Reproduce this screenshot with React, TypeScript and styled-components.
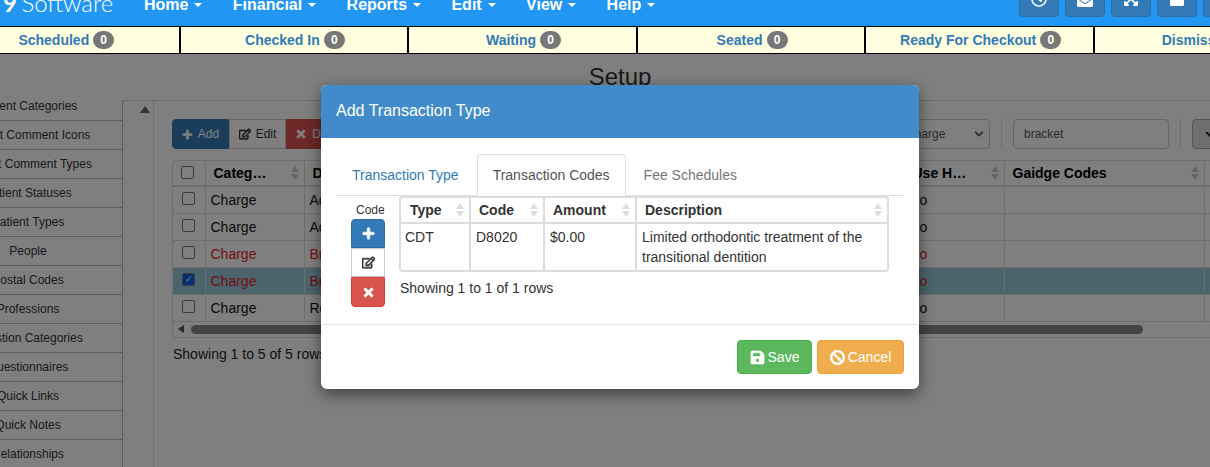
import React from "react";
import styled, { createGlobalStyle } from "styled-components";
import { FaPlus, FaRegEdit, FaTimes, FaSave, FaBan, FaRegClock, FaEnvelopeOpen, FaExpandArrowsAlt, FaSquare, FaChevronDown } from "react-icons/fa";

const Global = createGlobalStyle`
  html, body { margin: 0; padding: 0; background: #fff; }
  body { font-family: "Liberation Sans", Arial, sans-serif; font-size: 14px; color: #333; }
  * { box-sizing: border-box; }
`;

const Page = styled.div`
  position: relative;
  width: 1210px;
  height: 467px;
  overflow: hidden;
  background: #fff;
`;

const Top = styled.header`
  position: relative;
  z-index: 3;
`;

const NavBar = styled.nav`
  display: flex;
  align-items: flex-end;
  height: 26px;
  overflow: hidden;
  background: #2196f3;
  color: #fff;
`;

const Brand = styled.div`
  width: 144px;
  flex: none;
  padding: 0 0 8px 3px;
  font-family: Lato, sans-serif;
  font-weight: 300;
  font-size: 24px;
  line-height: 30px;
  white-space: nowrap;
  b { font-weight: 700; margin-right: -2px; }
`;

const NavMenu = styled.div`
  display: flex;
  gap: 30.4px;
  padding-bottom: 10px;
  flex: 1;
`;

const NavItem = styled.span`
  display: flex;
  align-items: center;
  gap: 6px;
  font-size: 16px;
  font-weight: 700;
  line-height: 22px;
  &::after {
    content: "";
    border-top: 4px solid #fff;
    border-left: 4px solid transparent;
    border-right: 4px solid transparent;
  }
`;

const NavTools = styled.div`
  display: flex;
  gap: 6px;
  align-self: flex-end;
  padding-bottom: 9px;
  margin-right: -33px;
`;

const NavTool = styled.span`
  display: flex;
  justify-content: center;
  align-items: flex-end;
  width: 40px;
  height: 34px;
  padding-bottom: 9px;
  border: 1px solid #2e6da4;
  border-radius: 4px;
  background: #337ab7;
  color: #fff;
  font-size: 16px;
`;

const StatusBar = styled.div`
  display: grid;
  grid-template-columns: repeat(6, 228.6px);
  margin-left: -48px;
  width: 1380px;
  height: 28px;
  border-top: 1px solid #000;
  border-bottom: 1px solid #000;
  background: #ffffe0;
`;

const StatusCell = styled.div`
  display: flex;
  justify-content: center;
  align-items: center;
  gap: 4px;
  padding-left: 2px;
  border-right: 2px solid #000;
  color: #337ab7;
  font-weight: 700;
  font-size: 14px;
`;

const Badge = styled.span`
  min-width: 21px;
  height: 18px;
  border-radius: 10px;
  background: #777;
  color: #fff;
  font-size: 12px;
  line-height: 18px;
  text-align: center;
`;

const Title = styled.h1`
  margin: 9px 0 0;
  padding-left: 30px;
  height: 37px;
  font-size: 24px;
  font-weight: 400;
  line-height: 28px;
  text-align: center;
  color: #333;
`;

const Body = styled.div`
  display: flex;
  height: 367px;
`;

const Sidebar = styled.aside`
  flex: none;
  width: 189px;
  margin-left: -66px;
  border-right: 1px solid #bbb;
  overflow: hidden;
`;

const SideList = styled.div`
  margin-top: -8px;
`;

const SideItem = styled.div`
  height: 29px;
  border-bottom: 1px solid #bbb;
  font-size: 12px;
  line-height: 28px;
  text-align: center;
  white-space: nowrap;
  color: #333;
`;

const Gutter = styled.div`
  flex: none;
  width: 31px;
  padding: 5px 0 0 17px;
  border-top: 1px solid #ddd;
  border-right: 1px solid #ddd;
`;

const UpArrow = styled.div`
  width: 0;
  border-bottom: 7px solid #666;
  border-left: 5px solid transparent;
  border-right: 5px solid transparent;
`;

const Main = styled.main`
  flex: 1;
  min-width: 0;
  padding: 18px 0 0 18px;
  border-top: 1px solid #ddd;
`;

const Toolbar = styled.div`
  display: flex;
  height: 30px;
`;

const ToolGroup = styled.div`
  display: flex;
  flex: none;
  width: 770px;
`;

const ToolBtn = styled.span<{ $bg: string; $fg: string; $w: number }>`
  display: flex;
  align-items: center;
  justify-content: center;
  gap: 5px;
  width: ${(p) => p.$w}px;
  background: ${(p) => p.$bg};
  color: ${(p) => p.$fg};
  border: 1px solid ${(p) => (p.$bg === "#fff" ? "#ccc" : p.$bg)};
  font-size: 12px;
  &:first-child { border-radius: 4px 0 0 4px; }
  svg { stroke: currentColor; stroke-width: 30px; }
`;

const FilterSelect = styled.div`
  display: flex;
  align-items: center;
  justify-content: space-between;
  flex: none;
  width: 128px;
  margin-left: -80px;
  padding: 0 5px 0 43px;
  border: 1px solid #ccc;
  border-radius: 4px;
  font-size: 12px;
  color: #555;
`;

const ToolDivider = styled.span`
  flex: none;
  width: 1px;
  margin: 0 11px;
  background: #ddd;
`;

const FilterInput = styled.div`
  flex: none;
  width: 156px;
  padding-left: 10px;
  border: 1px solid #ccc;
  border-radius: 4px;
  font-size: 12px;
  line-height: 28px;
  color: #555;
`;

const ColumnBtn = styled.span`
  display: flex;
  align-items: center;
  padding-left: 12px;
  flex: none;
  width: 40px;
  height: 30px;
  border: 1px solid #aaa;
  border-radius: 4px;
  background: #dcdcdc;
  color: #111;
  font-size: 11px;
`;

const GridWrap = styled.div`
  width: 1100px;
  margin-top: 11px;
  border: 1px solid #ddd;
  border-radius: 4px;
  overflow: hidden;
`;

const Grid = styled.table`
  border-collapse: collapse;
  table-layout: fixed;
  width: 1100px;
  font-size: 14px;
  color: #222;
`;

const GridHead = styled.th`
  position: relative;
  height: 25px;
  padding: 0 8px;
  border-right: 1px solid #ddd;
  border-bottom: 2px solid #ddd;
  font-size: 14px;
  text-align: left;
  color: #000;
  white-space: nowrap;
`;

const GridCell = styled.td<{ $red?: boolean; $sel?: boolean }>`
  height: 27px;
  padding: 0 5px;
  border-right: 1px solid #ddd;
  border-bottom: 1px solid #ddd;
  color: ${(p) => (p.$red ? "#e0202a" : "#111")};
  background: ${(p) => (p.$sel ? "#98cbd9" : "transparent")};
  white-space: nowrap;
  overflow: hidden;
`;

const CheckCell = styled(GridCell)`
  padding: 0 0 0 9px;
`;

const Check = styled.span<{ $on?: boolean }>`
  display: flex;
  align-items: center;
  justify-content: center;
  width: 13px;
  height: 13px;
  border: 1px solid #767676;
  border-radius: 2px;
  background: ${(p) => (p.$on ? "#0a5fdb" : "#fff")};
  color: #fff;
  font-size: 9px;
  line-height: 1;
  margin-top: -2px;
`;

const Sort = styled.span<{ $c: string }>`
  position: absolute;
  right: 5px;
  top: 50%;
  margin-top: -7px;
  width: 8px;
  height: 14px;
  &::before, &::after {
    content: "";
    position: absolute;
    left: 0;
    border-left: 4px solid transparent;
    border-right: 4px solid transparent;
  }
  &::before { top: 0; border-bottom: 6px solid ${(p) => p.$c}; }
  &::after { bottom: 0; border-top: 6px solid ${(p) => p.$c}; }
`;

const HScroll = styled.div`
  display: flex;
  align-items: center;
  height: 15px;
  padding-left: 5px;
`;

const LeftArrow = styled.div`
  width: 0;
  border-right: 6px solid #555;
  border-top: 4px solid transparent;
  border-bottom: 4px solid transparent;
`;

const Thumb = styled.div`
  width: 952px;
  height: 9px;
  margin-left: 7px;
  border-radius: 5px;
  background: #888;
`;

const GridFoot = styled.div`
  margin: 8px 0 0 1px;
  color: #222;
  font-size: 14px;
`;

const Backdrop = styled.div`
  position: absolute;
  inset: 0;
  z-index: 2;
  background: rgba(0, 0, 0, 0.5);
`;

const Modal = styled.div`
  position: absolute;
  z-index: 4;
  left: 321px;
  top: 85px;
  width: 598px;
  height: 304px;
  display: flex;
  flex-direction: column;
  background: #fff;
  border-radius: 6px;
  overflow: hidden;
  box-shadow: 0 5px 15px rgba(0, 0, 0, 0.5);
`;

const ModalHeader = styled.div`
  height: 53px;
  flex: none;
  padding: 0 15px;
  background: #428bca;
  color: #fff;
  font-size: 16px;
  line-height: 52px;
`;

const ModalBody = styled.div`
  flex: 1;
  padding: 16px 15px 0;
`;

const Tabs = styled.div`
  display: flex;
  height: 42px;
  border-bottom: 1px solid #ddd;
`;

const Tab = styled.span<{ $state: "link" | "active" | "muted" }>`
  height: 42px;
  margin-right: 2px;
  padding: 0 15px;
  border: 1px solid ${(p) => (p.$state === "active" ? "#ddd" : "transparent")};
  border-bottom-color: ${(p) => (p.$state === "active" ? "#fff" : "transparent")};
  border-radius: 4px 4px 0 0;
  background: ${(p) => (p.$state === "active" ? "#fff" : "transparent")};
  line-height: 40px;
  color: ${(p) => (p.$state === "link" ? "#337ab7" : p.$state === "active" ? "#555" : "#777")};
`;

const TabPane = styled.div`
  display: flex;
  padding-left: 15px;
`;

const CodeCol = styled.div`
  flex: none;
  width: 34px;
  margin-right: 14px;
`;

const CodeLabel = styled.div`
  height: 23px;
  padding: 7px 0 0 5px;
  font-size: 12px;
  line-height: 14px;
  color: #333;
  white-space: nowrap;
`;

const StackBtn = styled.span<{ $bg: string; $fg: string; $line: string; $h: number }>`
  display: flex;
  align-items: center;
  justify-content: center;
  width: 34px;
  height: ${(p) => p.$h}px;
  background: ${(p) => p.$bg};
  color: ${(p) => p.$fg};
  border: 1px solid ${(p) => p.$line};
  font-size: 13px;
  &:nth-child(2) { border-radius: 4px 4px 0 0; }
  &:last-child { border-radius: 0 0 4px 4px; }
  svg { stroke: currentColor; stroke-width: 30px; }
`;

const InnerCol = styled.div`
  flex: none;
  width: 490px;
`;

const InnerWrap = styled.div`
  border: 2px solid #ddd;
  border-radius: 4px;
  overflow: hidden;
`;

const Inner = styled.table`
  width: 486px;
  table-layout: fixed;
  border-collapse: collapse;
`;

const InnerHead = styled.th`
  position: relative;
  height: 25px;
  padding: 0 0 0 8px;
  border-right: 2px solid #ddd;
  border-bottom: 2px solid #ddd;
  font-size: 14px;
  text-align: left;
  color: #333;
  &:first-child { padding-left: 9px; }
  &:last-child { border-right: 0; }
`;

const InnerCell = styled.td`
  height: 47px;
  padding: 3px 5px 0;
  vertical-align: top;
  border-right: 2px solid #ddd;
  font-size: 14px;
  line-height: 20px;
  color: #333;
  &:first-child { padding-left: 4px; }
  &:last-child { border-right: 0; }
`;

const InnerFoot = styled.div`
  margin: 8px 0 0 1px;
  line-height: 16px;
  color: #333;
`;

const ModalFooter = styled.div`
  display: flex;
  justify-content: flex-end;
  gap: 5px;
  height: 65px;
  flex: none;
  padding: 15px;
  border-top: 1px solid #e5e5e5;
`;

const FootBtn = styled.span<{ $bg: string; $line: string; $w: number }>`
  display: flex;
  align-items: center;
  justify-content: center;
  gap: 3px;
  width: ${(p) => p.$w}px;
  height: 34px;
  border: 1px solid ${(p) => p.$line};
  border-radius: 4px;
  background: ${(p) => p.$bg};
  color: #fff;
  font-size: 14px;
  svg { font-size: 15px; stroke: currentColor; stroke-width: 20px; }
`;

const menu = ["Home", "Financial", "Reports", "Edit", "View", "Help"];
const statuses = ["Scheduled", "Checked In", "Waiting", "Seated", "Ready For Checkout", "Dismissed"];
const sideItems = [
  "Patient Categories", "Patient Comment Icons", "Patient Comment Types", "Patient Statuses",
  "Patient Types", "People", "Postal Codes", "Professions", "Question Categories",
  "Questionnaires", "Quick Links", "Quick Notes", "Relationships",
];
const rows = [
  { d: "Adjustment", red: false, sel: false },
  { d: "Adjustment", red: false, sel: false },
  { d: "Bracket", red: true, sel: false },
  { d: "Bracket", red: true, sel: true },
  { d: "Retainer", red: false, sel: false },
];

export default function App() {
  return (
    <Page>
      <Global />
      <Top>
        <NavBar>
          <Brand><b>9</b> Software</Brand>
          <NavMenu>
            {menu.map((m) => <NavItem key={m}>{m}</NavItem>)}
          </NavMenu>
          <NavTools>
            <NavTool><FaRegClock /></NavTool>
            <NavTool><FaEnvelopeOpen /></NavTool>
            <NavTool><FaExpandArrowsAlt /></NavTool>
            <NavTool><FaSquare /></NavTool>
            <NavTool />
          </NavTools>
        </NavBar>
        <StatusBar>
          {statuses.map((s) => (
            <StatusCell key={s}>{s} <Badge>0</Badge></StatusCell>
          ))}
        </StatusBar>
      </Top>
      <Title>Setup</Title>
      <Body>
        <Sidebar>
          <SideList>
            {sideItems.map((s) => <SideItem key={s}>{s}</SideItem>)}
          </SideList>
        </Sidebar>
        <Gutter><UpArrow /></Gutter>
        <Main>
          <Toolbar>
            <ToolGroup>
              <ToolBtn $bg="#337ab7" $fg="#fff" $w={57}><FaPlus size={11} /> Add</ToolBtn>
              <ToolBtn $bg="#fff" $fg="#333" $w={57}><FaRegEdit size={12} /> Edit</ToolBtn>
              <ToolBtn $bg="#d9534f" $fg="#fff" $w={70}><FaTimes size={12} /> Delete</ToolBtn>
            </ToolGroup>
            <FilterSelect>Charge <FaChevronDown size={10} /></FilterSelect>
            <ToolDivider />
            <FilterInput>bracket</FilterInput>
            <ToolDivider />
            <ColumnBtn><FaChevronDown /></ColumnBtn>
          </Toolbar>
          <GridWrap>
            <Grid>
              <colgroup>
                <col width="32" /><col width="99" /><col width="600" /><col width="100" /><col width="200" /><col />
              </colgroup>
              <thead>
                <tr>
                  <GridHead><Check /></GridHead>
                  <GridHead>Categ…<Sort $c="#ccc" /></GridHead>
                  <GridHead>Description<Sort $c="#ccc" /></GridHead>
                  <GridHead>Use H…<Sort $c="#ccc" /></GridHead>
                  <GridHead>Gaidge Codes<Sort $c="#ccc" /></GridHead>
                  <GridHead />
                </tr>
              </thead>
              <tbody>
                {rows.map((r, i) => (
                  <tr key={i}>
                    <CheckCell $sel={r.sel}><Check $on={r.sel}>{r.sel ? "✓" : ""}</Check></CheckCell>
                    <GridCell $red={r.red} $sel={r.sel}>Charge</GridCell>
                    <GridCell $red={r.red} $sel={r.sel}>{r.d}</GridCell>
                    <GridCell $red={r.red} $sel={r.sel}>No</GridCell>
                    <GridCell $sel={r.sel} />
                    <GridCell $sel={r.sel} />
                  </tr>
                ))}
              </tbody>
            </Grid>
            <HScroll><LeftArrow /><Thumb /></HScroll>
          </GridWrap>
          <GridFoot>Showing 1 to 5 of 5 rows</GridFoot>
        </Main>
      </Body>
      <Backdrop />
      <Modal>
        <ModalHeader>Add Transaction Type</ModalHeader>
        <ModalBody>
          <Tabs>
            <Tab $state="link">Transaction Type</Tab>
            <Tab $state="active">Transaction Codes</Tab>
            <Tab $state="muted">Fee Schedules</Tab>
          </Tabs>
          <TabPane>
            <CodeCol>
              <CodeLabel>Code</CodeLabel>
              <StackBtn $bg="#337ab7" $fg="#fff" $line="#2e6da4" $h={29}><FaPlus /></StackBtn>
              <StackBtn $bg="#fff" $fg="#333" $line="#ccc" $h={29}><FaRegEdit /></StackBtn>
              <StackBtn $bg="#d9534f" $fg="#fff" $line="#d43f3a" $h={30}><FaTimes /></StackBtn>
            </CodeCol>
            <InnerCol>
              <InnerWrap>
                <Inner>
                  <colgroup>
                    <col width="69" /><col width="74" /><col width="92" /><col />
                  </colgroup>
                  <thead>
                    <tr>
                      <InnerHead>Type<Sort $c="#ddd" /></InnerHead>
                      <InnerHead>Code<Sort $c="#ddd" /></InnerHead>
                      <InnerHead>Amount<Sort $c="#ddd" /></InnerHead>
                      <InnerHead>Description<Sort $c="#ddd" /></InnerHead>
                    </tr>
                  </thead>
                  <tbody>
                    <tr>
                      <InnerCell>CDT</InnerCell>
                      <InnerCell>D8020</InnerCell>
                      <InnerCell>$0.00</InnerCell>
                      <InnerCell>Limited orthodontic treatment of the transitional dentition</InnerCell>
                    </tr>
                  </tbody>
                </Inner>
              </InnerWrap>
              <InnerFoot>Showing 1 to 1 of 1 rows</InnerFoot>
            </InnerCol>
          </TabPane>
        </ModalBody>
        <ModalFooter>
          <FootBtn $bg="#5cb85c" $line="#4cae4c" $w={75}><FaSave /> Save</FootBtn>
          <FootBtn $bg="#f0ad4e" $line="#eea236" $w={87}><FaBan /> Cancel</FootBtn>
        </ModalFooter>
      </Modal>
    </Page>
  );
}
